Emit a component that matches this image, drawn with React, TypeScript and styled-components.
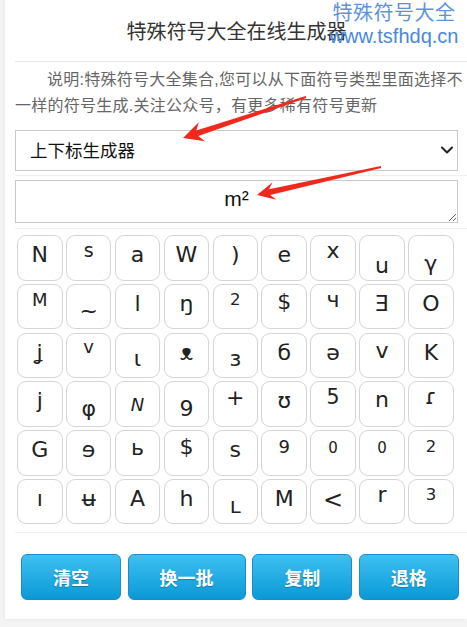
import React from "react";
import styled, { createGlobalStyle } from "styled-components";
import { ChevronDown } from "lucide-react";

type Sym = {
  c: string;
  dy?: number;
  size?: number;
  italic?: boolean;
};

// dy: vertical shift of the glyph (px, down is positive); size: font size in px
const symbols: Sym[] = [
  { c: "N" }, { c: "s", dy: -5, size: 19 }, { c: "a" }, { c: "W" }, { c: ")" }, { c: "e" }, { c: "x", dy: -4 }, { c: "u", dy: 11 }, { c: "γ", dy: 9 },
  { c: "M", dy: -5, size: 18 }, { c: "~", dy: 7 }, { c: "l" }, { c: "ŋ" }, { c: "2", dy: -6, size: 16.5 }, { c: "$", dy: -2 }, { c: "ч", dy: -4 }, { c: "Ǝ" }, { c: "O" },
  { c: "ʝ" }, { c: "v", dy: -7, size: 18 }, { c: "ɩ", dy: 6 }, { c: "ᴥ" }, { c: "ɜ", dy: 6 }, { c: "б" }, { c: "ə" }, { c: "v", dy: -2 }, { c: "K" },
  { c: "j" }, { c: "φ", dy: 8 }, { c: "N", dy: 3, size: 18, italic: true }, { c: "9", dy: 8 }, { c: "+", dy: -3 }, { c: "ʊ" }, { c: "5", dy: -4, size: 20.5 }, { c: "n", dy: -1 }, { c: "ɾ", dy: -4 },
  { c: "G" }, { c: "ɘ" }, { c: "ь", dy: -2 }, { c: "$", dy: -3 }, { c: "s" }, { c: "9", dy: -4, size: 18 }, { c: "0", dy: -4, size: 15 }, { c: "0", dy: -4, size: 15 }, { c: "2", dy: -5, size: 16.5 },
  { c: "ı" }, { c: "ʉ" }, { c: "A" }, { c: "h" }, { c: "ʟ", dy: 7 }, { c: "M" }, { c: "<", dy: 2, size: 24 }, { c: "r", dy: -4 }, { c: "3", dy: -6, size: 16.5 },
];

const buttons = ["清空", "换一批", "复制", "退格"];

// red annotation arrow, tail -> tip
const arrowPoints = (x1: number, y1: number, x2: number, y2: number, head: number, half: number) => {
  const len = Math.hypot(x2 - x1, y2 - y1);
  const ux = (x2 - x1) / len;
  const uy = (y2 - y1) / len;
  const nx = -uy;
  const ny = ux;
  const bx = x2 - ux * head;
  const by = y2 - uy * head;
  const kx = x2 - ux * (head - 5);
  const ky = y2 - uy * (head - 5);
  const pts = [
    [x1 + nx * 1, y1 + ny * 1],
    [kx + nx * 3, ky + ny * 3],
    [bx + nx * half, by + ny * half],
    [x2, y2],
    [bx - nx * half, by - ny * half],
    [kx - nx * 3, ky - ny * 3],
    [x1 - nx * 1, y1 - ny * 1],
  ];
  return pts.map((p) => p.map((v) => v.toFixed(1)).join(",")).join(" ");
};

export default function App() {
  return (
    <Page>
      <GlobalStyle />
      <Card>
        <Title>特殊符号大全在线生成器</Title>
        <Desc>说明:特殊符号大全集合,您可以从下面符号类型里面选择不一样的符号生成.关注公众号，有更多稀有符号更新</Desc>
        <SelectRow>
          <SelectWrap>
            <Select defaultValue="sup">
              <option value="sup">上下标生成器</option>
            </Select>
            <Chevron>
              <ChevronDown size={20} strokeWidth={2.4} />
            </Chevron>
          </SelectWrap>
        </SelectRow>
        <TextRow>
          <Output defaultValue="m²" />
        </TextRow>
        <Grid>
          {symbols.map((s, i) => (
            <Cell key={i}>
              <Glyph $dy={s.dy ?? 0} $size={s.size ?? 22} $italic={!!s.italic}>
                {s.c}
              </Glyph>
            </Cell>
          ))}
        </Grid>
        <ButtonRow>
          {buttons.map((b) => (
            <BlueButton key={b}>{b}</BlueButton>
          ))}
        </ButtonRow>
      </Card>

      <Watermark>
        <MarkName>特殊符号大全</MarkName>
        <MarkUrl>www.tsfhdq.cn</MarkUrl>
      </Watermark>

      <Arrows width="467" height="627" viewBox="0 0 467 627">
        <polygon points={arrowPoints(306, 97, 183, 138, 20, 10)} fill="#f3281c" />
        <polygon points={arrowPoints(381, 167, 257, 195, 18, 9)} fill="#f3281c" />
      </Arrows>
    </Page>
  );
}

const GlobalStyle = createGlobalStyle`
  html, body {
    margin: 0;
    padding: 0;
    background: #f4f4f4;
    overflow: hidden;
  }
  body {
    font-family: "Liberation Sans", "Noto Sans CJK SC", sans-serif;
  }
`;

const Page = styled.div`
  position: relative;
  width: 467px;
  height: 627px;
  overflow: hidden;
`;

const Card = styled.div`
  box-sizing: border-box;
  margin-left: 5px;
  width: 463px;
  padding: 0 0 19px 10px;
  background: #fff;
  box-shadow: 0 0 5px rgba(0, 0, 0, 0.07);
`;

const Title = styled.div`
  box-sizing: border-box;
  height: 62px;
  padding: 3px 10px 0 0;
  border-bottom: 1px solid #e6e6e6;
  display: flex;
  align-items: center;
  justify-content: center;
  font-size: 20px;
  line-height: 24px;
  color: #333;
`;

const Desc = styled.p`
  margin: 0;
  padding-top: 5px;
  font-size: 16px;
  line-height: 26px;
  color: #666;
  text-indent: 2em;
  letter-spacing: 0.25px;
`;

const SelectRow = styled.div`
  margin-top: 11px;
  padding-bottom: 4px;
  border-bottom: 1px solid #efefef;
`;

const SelectWrap = styled.div`
  position: relative;
  width: 443px;
`;

const Select = styled.select`
  appearance: none;
  display: block;
  width: 443px;
  height: 41px;
  padding: 0 0 0 14px;
  border: 1px solid #c9c9c9;
  border-radius: 0;
  background: #fff;
  font-family: "Liberation Sans", "Noto Sans CJK SC", sans-serif;
  font-size: 17.5px;
  color: #111;
  outline: none;
`;

const Chevron = styled.span`
  position: absolute;
  right: 1px;
  top: 10px;
  display: flex;
  color: #222;
  pointer-events: none;
`;

const TextRow = styled.div`
  display: flex;
  padding: 4px 0 5px;
  border-bottom: 1px solid #efefef;
`;

const Output = styled.textarea`
  width: 443px;
  height: 43px;
  box-sizing: border-box;
  padding: 6px 8px 0;
  border: 1px solid #c9c9c9;
  border-radius: 0;
  font-family: "Liberation Sans", "Noto Sans CJK SC", sans-serif;
  font-size: 21px;
  line-height: 24px;
  color: #111;
  text-align: center;
  outline: none;
`;

const Grid = styled.div`
  display: grid;
  grid-template-columns: repeat(9, 45.5px);
  grid-auto-rows: 45.5px;
  column-gap: 3.4px;
  row-gap: 3.3px;
  padding: 6px 0 7.5px 2px;
  border-bottom: 1px solid #efefef;
`;

const Cell = styled.div`
  box-sizing: border-box;
  border: 1px solid #d5d5d5;
  border-radius: 9px;
  background: #fff;
  text-align: center;
  font-family: "DejaVu Sans", "Liberation Sans", sans-serif;
  font-size: 22px;
  line-height: 38px;
  color: #222;
  overflow: hidden;
`;

const Glyph = styled.span<{ $dy: number; $size: number; $italic: boolean }>`
  display: inline-block;
  font-size: ${(p) => p.$size}px;
  line-height: 1;
  font-style: ${(p) => (p.$italic ? "italic" : "normal")};
  transform: translateY(${(p) => p.$dy}px);
`;

const ButtonRow = styled.div`
  display: flex;
  gap: 6.6px;
  margin-top: 21px;
  padding-left: 6px;
`;

const BlueButton = styled.button`
  height: 46px;
  padding: 0 31px;
  border: 1px solid #1a8ccb;
  border-radius: 6px;
  background: linear-gradient(#3ec0f2, #0a99d6);
  color: #fff;
  font-family: "Noto Sans CJK SC", sans-serif;
  font-size: 18px;
  font-weight: 700;
  text-shadow: 0 1px 1px rgba(0, 0, 0, 0.25);
  cursor: pointer;
`;

const Watermark = styled.div`
  position: absolute;
  left: 324px;
  top: 0;
  width: 140px;
  text-align: center;
  color: #4a88dc;
  pointer-events: none;
`;

const MarkName = styled.div`
  font-family: "Noto Sans CJK SC", sans-serif;
  font-size: 20px;
  line-height: 24px;
  letter-spacing: 0.5px;
  opacity: 0.9;
`;

const MarkUrl = styled.div`
  font-family: "Liberation Sans", sans-serif;
  font-size: 20px;
  line-height: 24px;
`;

const Arrows = styled.svg`
  position: absolute;
  left: 0;
  top: 0;
  pointer-events: none;
`;
